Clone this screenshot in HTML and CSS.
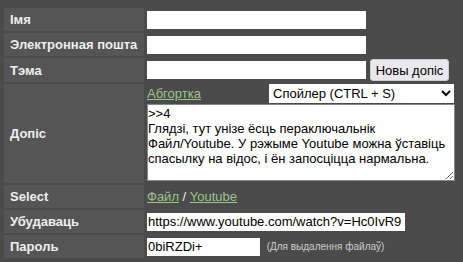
FILE: index.html
```html
<!DOCTYPE html>
<html lang="be">
<head>
    <meta charset="UTF-8">
    <title>Новы допіс</title>
    <link rel="stylesheet" href="styles.css">
</head>
<body>
    <form class="post-form">
        <table class="post-table">
            <tr>
                <th>Імя</th>
                <td><input type="text" class="field"></td>
            </tr>
            <tr>
                <th>Электронная пошта</th>
                <td><input type="text" class="field"></td>
            </tr>
            <tr>
                <th>Тэма</th>
                <td class="subject-cell">
                    <input type="text" class="field">
                    <button type="button" class="submit-btn">Новы допіс</button>
                </td>
            </tr>
            <tr>
                <th>Допіс</th>
                <td class="body-cell">
                    <div class="body-tools">
                        <a href="#" class="link">Абгортка</a>
                        <select class="markup-select">
                            <option>Спойлер (CTRL + S)</option>
                        </select>
                    </div>
                    <textarea class="body-text" spellcheck="false">&gt;&gt;4
Глядзі, тут унізе ёсць пераключальнік Файл/Youtube. У рэжыме Youtube можна ўставіць спасылку на відос, і ён запосціцца нармальна.</textarea>
                </td>
            </tr>
            <tr>
                <th>Select</th>
                <td class="mode-cell"><a href="#" class="link">Файл</a> / <a href="#" class="link">Youtube</a></td>
            </tr>
            <tr>
                <th>Убудаваць</th>
                <td><input type="text" class="field embed" value="https://www.youtube.com/watch?v=Hc0IvR9"></td>
            </tr>
            <tr>
                <th>Пароль</th>
                <td>
                    <input type="text" class="field password" value="0biRZDi+">
                    <span class="hint">(Для выдалення файлаў)</span>
                </td>
            </tr>
        </table>
    </form>
</body>
</html>
```

FILE: styles.css
```css
* {
    box-sizing: border-box;
}

body {
    margin: 0;
    padding: 6px 2px;
    background: #4b4b4b;
    font-family: 'Liberation Sans', Arial, sans-serif;
    font-size: 13px;
    color: #eee;
}

.post-table {
    border-spacing: 2px;
}

.post-table th {
    width: 140px;
    background: #555;
    text-align: left;
    padding: 2px 6px;
    font-weight: bold;
    color: #eee;
    height: 23px;
}

.post-table td {
    padding: 1px;
    vertical-align: middle;
}

.field {
    display: inline-block;
    width: 219px;
    height: 18px;
    border: 0;
    background: #fff;
    color: #000;
    font-family: 'Liberation Sans', Arial, sans-serif;
    font-size: 13px;
    padding: 0 1px;
    margin: 0;
    vertical-align: middle;
}

.subject-cell {
    white-space: nowrap;
}

.submit-btn {
    margin: 0;
    height: 22px;
    padding: 0 5px;
    background: #e9e9ed;
    border: 1px solid #ccc;
    border-radius: 3px;
    font-family: 'Liberation Sans', Arial, sans-serif;
    font-size: 13px;
    color: #000;
    vertical-align: middle;
}

.post-table .body-cell {
    padding: 0 1px 2px;
}

.body-tools {
    display: flex;
    justify-content: space-between;
    align-items: center;
    width: 308px;
}

.link {
    color: #9dc48c;
    text-decoration: underline;
}

.markup-select {
    width: 185px;
    height: 19px;
    margin-right: 1px;
    border: 0;
    border-radius: 0;
    background: #fff;
    color: #000;
    font-family: 'Liberation Sans', Arial, sans-serif;
    font-size: 13px;
}

.body-text {
    display: block;
    width: 308px;
    height: 77px;
    margin: 1px 0 0;
    padding: 1px 0;
    border: 1px solid #888;
    background: #fff;
    color: #000;
    font-family: 'Liberation Sans', Arial, sans-serif;
    font-size: 13px;
    line-height: 15px;
    resize: both;
}

.mode-cell {
    color: #eee;
}

.embed {
    width: 258px;
}

.password {
    width: 113px;
}

.hint {
    margin-left: 3px;
    font-size: 10px;
    color: #ccc;
}
```
